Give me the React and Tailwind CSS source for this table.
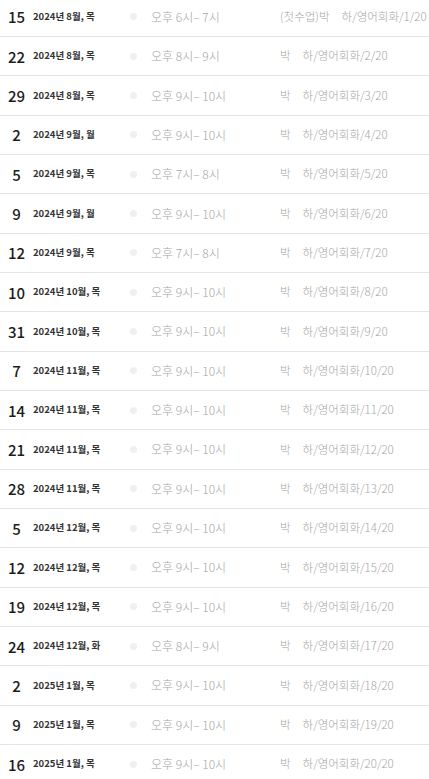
const rows = [
  ["15", "2024년 8월, 목", "오후 6시– 7시", "(첫수업)박", "1"],
  ["22", "2024년 8월, 목", "오후 8시– 9시", "박", "2"],
  ["29", "2024년 8월, 목", "오후 9시– 10시", "박", "3"],
  ["2", "2024년 9월, 월", "오후 9시– 10시", "박", "4"],
  ["5", "2024년 9월, 목", "오후 7시– 8시", "박", "5"],
  ["9", "2024년 9월, 월", "오후 9시– 10시", "박", "6"],
  ["12", "2024년 9월, 목", "오후 7시– 8시", "박", "7"],
  ["10", "2024년 10월, 목", "오후 9시– 10시", "박", "8"],
  ["31", "2024년 10월, 목", "오후 9시– 10시", "박", "9"],
  ["7", "2024년 11월, 목", "오후 9시– 10시", "박", "10"],
  ["14", "2024년 11월, 목", "오후 9시– 10시", "박", "11"],
  ["21", "2024년 11월, 목", "오후 9시– 10시", "박", "12"],
  ["28", "2024년 11월, 목", "오후 9시– 10시", "박", "13"],
  ["5", "2024년 12월, 목", "오후 9시– 10시", "박", "14"],
  ["12", "2024년 12월, 목", "오후 9시– 10시", "박", "15"],
  ["19", "2024년 12월, 목", "오후 9시– 10시", "박", "16"],
  ["24", "2024년 12월, 화", "오후 8시– 9시", "박", "17"],
  ["2", "2025년 1월, 목", "오후 9시– 10시", "박", "18"],
  ["9", "2025년 1월, 목", "오후 9시– 10시", "박", "19"],
  ["16", "2025년 1월, 목", "오후 9시– 10시", "박", "20"],
];

export default function App() {
  return (
    <div
      className="w-[429px] h-[779px] overflow-hidden bg-white"
      style={{ fontFamily: '"Noto Sans CJK KR", "Noto Sans", sans-serif' }}
    >
      <div className="-mt-[2.3px]">
        {rows.map((r, i) => (
          <div
            key={i}
            className="flex items-center h-[39.33px] border-b border-[#e1e4ec]"
          >
            <div className="w-[33px] flex justify-center text-[15px] font-medium text-[#1c1c1c] leading-none">
              {r[0]}
            </div>
            <div className="w-[96px] text-[9.5px] font-semibold text-[#333] leading-none">
              {r[1]}
            </div>
            <div className="w-[22px] flex">
              <span className="w-[7px] h-[7px] rounded-full bg-[#f0f0f2] ml-[1px]"></span>
            </div>
            <div className="w-[129px] text-[12px] font-light text-[#a5a5a5] leading-none">
              {r[2]}
            </div>
            <div className="flex text-[11.5px] font-light text-[#a5a5a5] leading-none whitespace-nowrap">
              <span>{r[3]}</span>
              <span className="w-[12px]"></span>
              <span>하/영어회화/{r[4]}/20</span>
            </div>
          </div>
        ))}
      </div>
    </div>
  );
}
